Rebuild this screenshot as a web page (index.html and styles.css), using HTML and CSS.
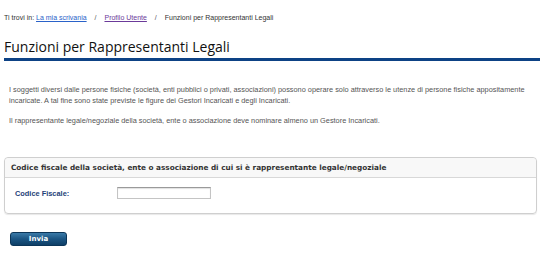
FILE: index.html
```html
<!DOCTYPE html>
<html>
	<head>
		<meta charset="UTF-8">
		<title>Funzioni per Rappresentanti Legali</title>
		<link rel="stylesheet" href="styles.css">
	</head>
	<body>
		<div class="page">
			<div class="crumbs">
				Ti trovi in: <a href="#" class="lnk">La mia scrivania</a>
				<span class="sep">/</span>
				<a href="#" class="visto">Profilo Utente</a>
				<span class="sep">/</span>
				<span>Funzioni per Rappresentanti Legali</span>
			</div>
			<h1 class="titolo">Funzioni per Rappresentanti Legali</h1>
			<div class="testo">
				<p>I soggetti diversi dalle persone fisiche (società, enti pubblici o privati, associazioni) possono operare solo attraverso le utenze di persone fisiche appositamente incaricate. A tal fine sono state previste le figure dei Gestori Incaricati e degli Incaricati.</p>
				<p>Il rappresentante legale/negoziale della società, ente o associazione deve nominare almeno un Gestore Incaricati.</p>
			</div>
			<form class="box">
				<div class="box-tit">Codice fiscale della società, ente o associazione di cui si è rappresentante legale/negoziale</div>
				<div class="box-corpo">
					<label class="etich" for="cf">Codice Fiscale:</label>
					<input type="text" id="cf" class="campo">
				</div>
			</form>
			<div class="azioni">
				<button type="button" class="btn">Invia</button>
			</div>
		</div>
	</body>
</html>
```

FILE: styles.css
```css
body{
	margin:0;
	background:#fff;
	font-family:"Liberation Sans", Arial, sans-serif;
	color:#444;
}
.page{
	padding:13px 3px 0 4px;
}
.crumbs{
	font-size:7px;
	line-height:10px;
	color:#333;
}
.crumbs a{
	text-decoration:underline;
}
.lnk{
	color:#2a62c9;
}
.visto{
	color:#6b3a9a;
}
.sep{
	margin:0 6px;
	color:#555;
}
.titolo{
	margin:15px -3px 0 0;
	padding:0 0 2px 0;
	font:500 14px/18px "Open Sans", sans-serif;
	color:#111;
	border-bottom:3px solid #0d4285;
}
.testo{
	padding:23px 5px 0 5px;
	font-size:7.35px;
	line-height:11px;
	color:#555;
}
.testo p{
	margin:0 0 9px 0;
}
.box{
	margin:31px 0 0 0;
	border:1px solid #cfcfcf;
	border-radius:4px;
	box-shadow:0 1px 1px #e8e8e8;
}
.box-tit{
	height:19px;
	padding:0 6px;
	font:bold 7.3px/19px "DejaVu Sans", Verdana, sans-serif;
	color:#333;
	background:#f8f8f8;
	border-bottom:1px solid #d8d8d8;
	border-radius:4px 4px 0 0;
}
.box-corpo{
	display:flex;
	align-items:center;
	padding:9px 11px 14px 10px;
}
.etich{
	width:102px;
	font-size:7.4px;
	font-weight:bold;
	color:#1e3f78;
}
.campo{
	width:90px;
	height:8px;
	margin:0;
	padding:1px;
	border:1px solid #c4c4c4;
	border-top-color:#9a9a9a;
	box-shadow:inset 0 1px 1px #e0e0e0;
	font-size:7px;
}
.azioni{
	padding:13px 6px 0 6px;
}
.btn{
	width:57px;
	height:14px;
	padding:0;
	border:1px solid #0b3558;
	border-radius:3px;
	background:linear-gradient(#3a7aa8, #1b5583 50%, #0e3f67);
	color:#fff;
	font:bold 7px/12px "DejaVu Sans", Verdana, sans-serif;
	cursor:pointer;
}
```
